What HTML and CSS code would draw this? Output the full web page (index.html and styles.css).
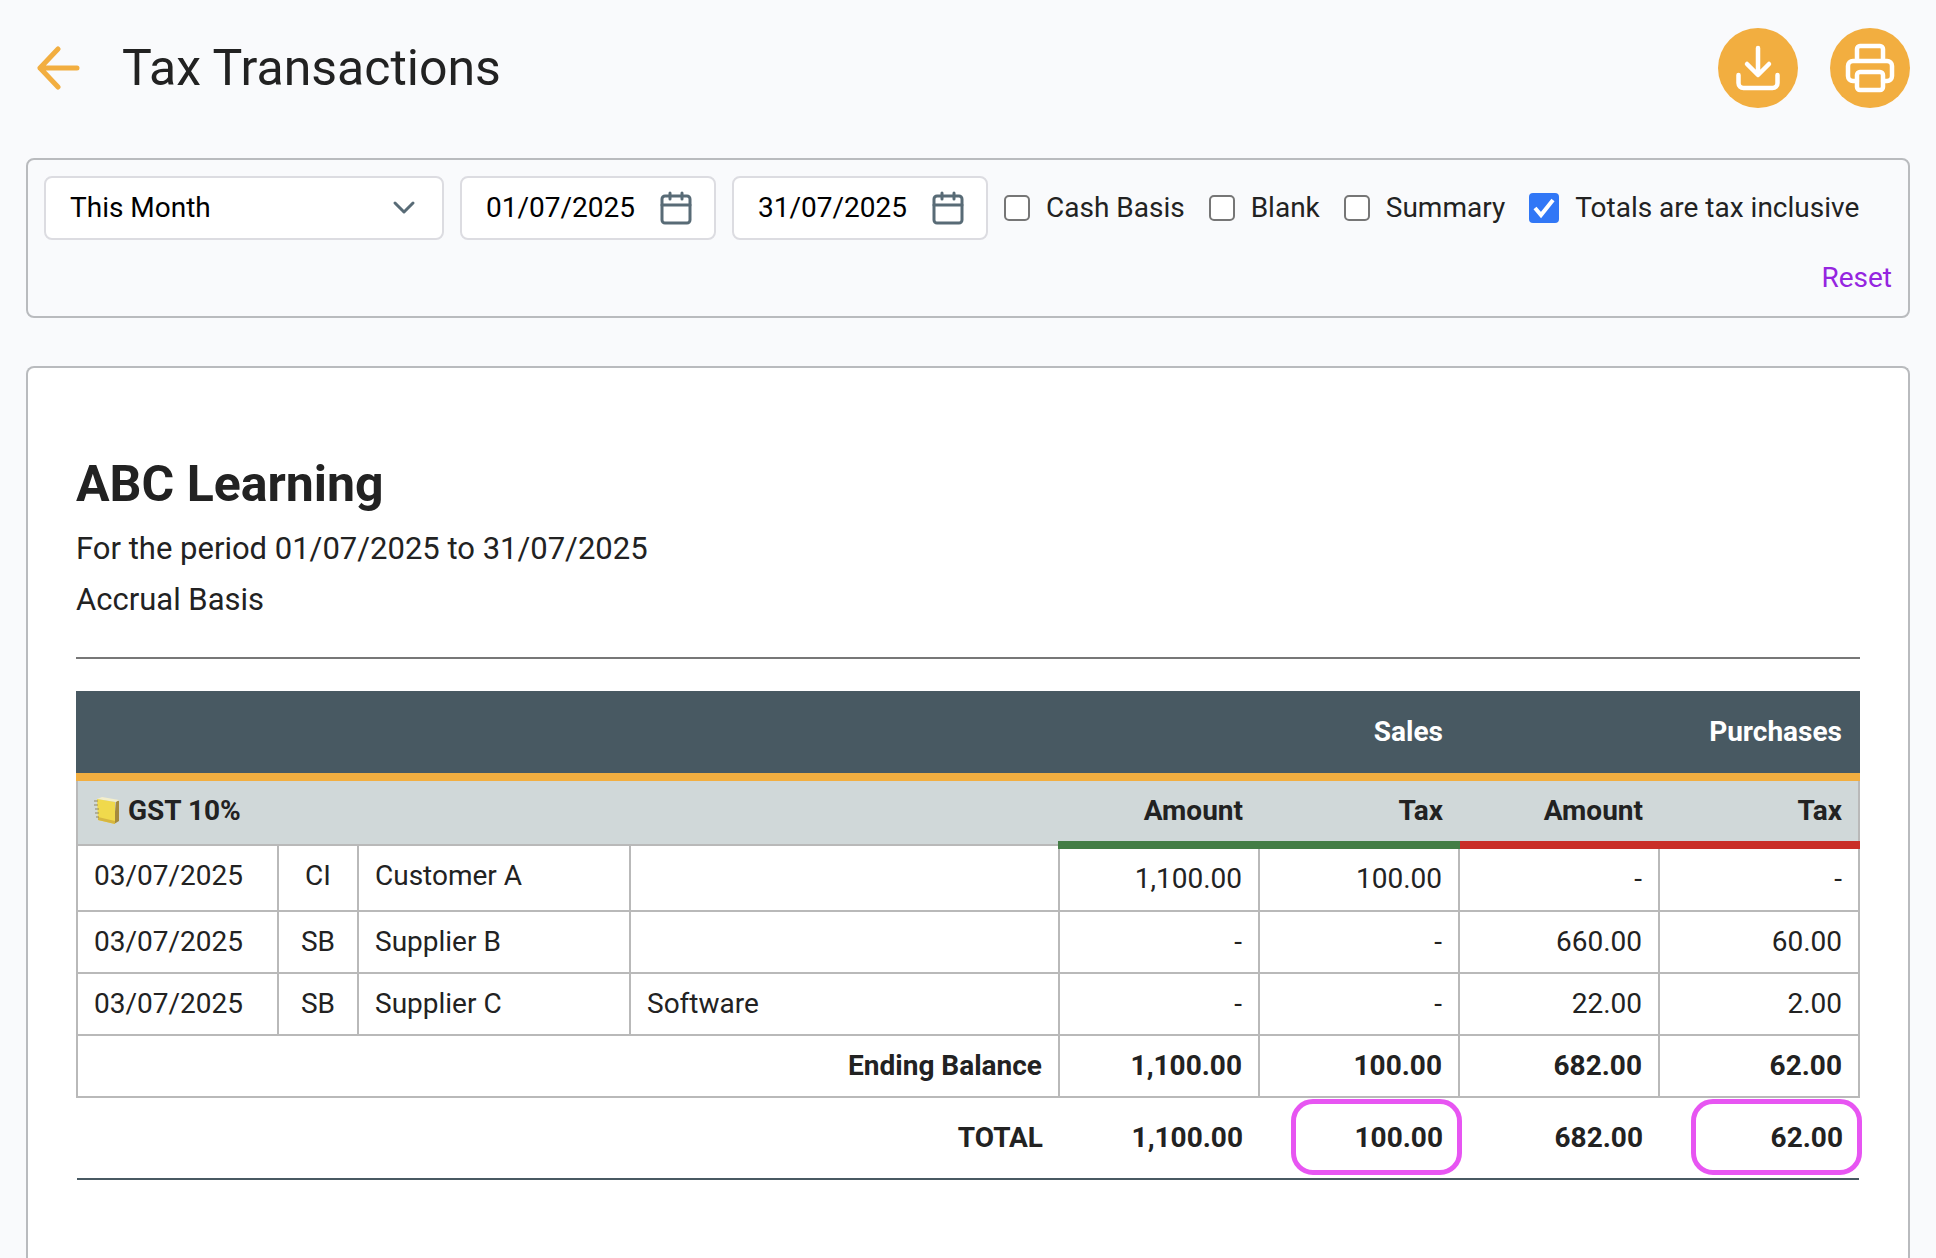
FILE: index.html
```
<!DOCTYPE html>
<html lang="en" dir="ltr">
  <head>
    <meta charset="utf-8">
    <title>Tax Transactions</title>
    <link rel="stylesheet" href="styles.css">
  </head>
  <body>
    <header class="page-header">
      <a class="back" href="#" aria-label="Back">
        <svg width="44" height="44" viewBox="0 0 44 44">
          <path d="M41 22H4M22 3L4 22l18 19"/>
        </svg>
      </a>
      <h1>Tax Transactions</h1>
      <div class="actions">
        <button class="round-btn" type="button" aria-label="Download">
          <svg width="48" height="48" viewBox="0 0 48 48">
            <path d="M24 4v26M13 20l11 11 11-11M4.500 31v8a5 5 0 0 0 5 5h29a5 5 0 0 0 5-5v-8"/>
          </svg>
        </button>
        <button class="round-btn" type="button" aria-label="Print">
          <svg width="48" height="48" viewBox="0 0 48 48">
            <path d="M11 37H7a5 5 0 0 1-5-5V22a5 5 0 0 1 5-5h34a5 5 0 0 1 5 5v10a5 5 0 0 1-5 5h-4M11 17V5a3 3 0 0 1 3-3h20a3 3 0 0 1 3 3v12"/>
            <rect x="11" y="28" width="26" height="18" rx="3"/>
          </svg>
        </button>
      </div>
    </header>

    <form class="filters">
      <div class="field field-period">
        <select aria-label="Period">
          <option>This Month</option>
          <option>Last Month</option>
        </select>
        <svg class="chevron" width="24" height="16" viewBox="0 0 24 16"><path d="M3 3l9 9 9-9"/></svg>
      </div>
      <div class="field field-date">
        <input type="text" value="01/07/2025" aria-label="From">
        <svg class="calendar" width="32" height="34" viewBox="0 0 32 34">
          <rect x="2" y="5" width="28" height="27" rx="3"/><path d="M2 14h28M10 2v6M22 2v6"/>
        </svg>
      </div>
      <div class="field field-date">
        <input type="text" value="31/07/2025" aria-label="To">
        <svg class="calendar" width="32" height="34" viewBox="0 0 32 34">
          <rect x="2" y="5" width="28" height="27" rx="3"/><path d="M2 14h28M10 2v6M22 2v6"/>
        </svg>
      </div>
      <div class="checks">
        <label><input type="checkbox">Cash Basis</label>
        <label><input type="checkbox">Blank</label>
        <label><input type="checkbox">Summary</label>
        <label><input type="checkbox" checked>Totals are tax inclusive</label>
      </div>
      <button class="reset" type="reset">Reset</button>
    </form>

    <main class="report">
      <h2>ABC Learning</h2>
      <p>For the period 01/07/2025 to 31/07/2025</p>
      <p>Accrual Basis</p>
      <hr>
      <table>
        <colgroup>
          <col class="col-date"><col class="col-type"><col class="col-name"><col>
          <col class="col-num"><col class="col-num"><col class="col-num"><col class="col-num">
        </colgroup>
        <thead>
          <tr class="groups">
            <th colspan="4"></th>
            <th colspan="2">Sales</th>
            <th colspan="2">Purchases</th>
          </tr>
          <tr class="heads">
            <th class="tax-name" colspan="4">
              <div class="tax-label">
                <svg width="26" height="28" viewBox="0 0 26 28">
                  <path fill="#a58a3c" d="M20 27l5-3V4l-3-1z"/>
                  <path fill="#f3eecb" d="M3 2l5-2 17 3-3 2z"/>
                  <path fill="#f0d94c" d="M3 2l18 3v22L4 23z"/>
                  <path fill="#d6b640" d="M4 20l17 4v3L4 23z"/>
                  <path fill="none" stroke="#8f8560" d="M0 4h4M0 8h4M1 12h4M1 16h4M2 20h3"/>
                </svg>
                GST 10%
              </div>
            </th>
            <th class="sales">Amount</th>
            <th class="sales">Tax</th>
            <th class="purchases">Amount</th>
            <th class="purchases">Tax</th>
          </tr>
        </thead>
        <tbody>
          <tr>
            <td>03/07/2025</td><td class="type">CI</td><td>Customer A</td><td></td>
            <td class="num">1,100.00</td><td class="num">100.00</td><td class="num">-</td><td class="num">-</td>
          </tr>
          <tr>
            <td>03/07/2025</td><td class="type">SB</td><td>Supplier B</td><td></td>
            <td class="num">-</td><td class="num">-</td><td class="num">660.00</td><td class="num">60.00</td>
          </tr>
          <tr>
            <td>03/07/2025</td><td class="type">SB</td><td>Supplier C</td><td>Software</td>
            <td class="num">-</td><td class="num">-</td><td class="num">22.00</td><td class="num">2.00</td>
          </tr>
          <tr class="ending">
            <td class="num" colspan="4">Ending Balance</td>
            <td class="num">1,100.00</td><td class="num">100.00</td><td class="num">682.00</td><td class="num">62.00</td>
          </tr>
        </tbody>
        <tfoot>
          <tr>
            <td colspan="4">TOTAL</td>
            <td>1,100.00</td>
            <td class="marked">100.00</td>
            <td>682.00</td>
            <td class="marked">62.00</td>
          </tr>
        </tfoot>
      </table>
    </main>
  </body>
</html>
```
FILE: styles.css
```
*{
  box-sizing : border-box;
}
html, body{
  height : 100%;
}
body{
  display : flex;
  flex-direction : column;
  margin : 0;
  padding : 28px 26px 0;
  background : #f9fafc;
  color : #222;
  font-family : Roboto, "Liberation Sans", sans-serif;
  font-size : 28px;
  line-height : 32px;
}
svg{
  display : block;
  flex : none;
}
/* header */
.page-header{
  display : flex;
  align-items : center;
  padding-left : 10px;
}
.back svg{
  fill : none;
  stroke : #f2ae40;
  stroke-width : 5;
  stroke-linecap : round;
  stroke-linejoin : round;
}
h1{
  margin : 0 0 0 42px;
  font-size : 50px;
  font-weight : 400;
  line-height : 60px;
}
.actions{
  display : flex;
  gap : 32px;
  margin-left : auto;
}
.round-btn{
  display : flex;
  align-items : center;
  justify-content : center;
  width : 80px;
  height : 80px;
  padding : 0;
  border : 0;
  border-radius : 50%;
  background : #f2ae40;
}
.round-btn svg{
  fill : none;
  stroke : #fff;
  stroke-width : 4.5;
  stroke-linecap : round;
  stroke-linejoin : round;
  overflow : visible;
}
/* filters */
.filters{
  display : flex;
  flex-wrap : wrap;
  align-items : center;
  gap : 18px 16px;
  margin-top : 50px;
  padding : 16px 16px 18px;
  border : 2px solid #b9bbbe;
  border-radius : 8px;
}
.field{
  display : flex;
  align-items : center;
  height : 64px;
  padding : 0 22px 0 24px;
  border : 2px solid #dcdce1;
  border-radius : 8px;
  background : #fff;
}
.field-period{
  width : 400px;
  padding-right : 26px;
}
.field-date{
  width : 256px;
}
.field select,
.field input{
  flex : 1;
  min-width : 0;
  padding : 0;
  border : 0;
  outline : 0;
  appearance : none;
  background : none;
  color : #000;
  font : inherit;
}
.chevron, .calendar{
  fill : none;
  stroke : #586b76;
  stroke-width : 3;
  stroke-linecap : round;
  stroke-linejoin : round;
}
.checks{
  display : flex;
  gap : 24px;
}
.checks label{
  display : flex;
  align-items : center;
  gap : 16px;
}
.checks input{
  width : 26px;
  height : 26px;
  margin : 0;
  border : 2px solid #767676;
  border-radius : 5px;
  appearance : none;
  background : #fff;
}
.checks input:checked{
  width : 30px;
  height : 30px;
  border : 0;
  border-radius : 4px;
  background : #3177f6 url("data:image/svg+xml,%3Csvg xmlns='http://www.w3.org/2000/svg' viewBox='0 0 30 30'%3E%3Cpath d='M6 15l6 7L24 7' fill='none' stroke='%23fff' stroke-width='4'/%3E%3C/svg%3E");
}
.reset{
  margin-left : auto;
  padding : 4px 0;
  border : 0;
  background : none;
  color : #9525e0;
  font : inherit;
}
/* report */
.report{
  flex : 1;
  margin-top : 48px;
  padding : 86px 48px 0;
  border : 2px solid #b9bbbe;
  border-bottom : 0;
  border-radius : 8px 8px 0 0;
  background : #fff;
}
h2{
  margin : 0 0 9px;
  font-size : 50px;
  line-height : 60px;
}
.report p{
  margin : 0;
  font-size : 31px;
  line-height : 51px;
}
hr{
  margin : 32px 0;
  border : 0;
  border-top : 2px solid #777;
}
table{
  width : 100%;
  table-layout : fixed;
  border-collapse : collapse;
}
.col-date{
  width : 201px;
}
.col-type{
  width : 80px;
}
.col-name{
  width : 272px;
}
.col-num{
  width : 200px;
}
th, td{
  padding : 14px 16px;
  text-align : left;
  vertical-align : top;
}
tbody td{
  border : 2px solid #b9b9b9;
}
tbody tr:first-child{
  height : 66px;
}
.groups th{
  padding : 25px 16px;
  border-bottom : 8px solid #f2ae40;
  background : #485962;
  color : #fff;
  text-align : right;
}
.groups th:first-child{
  border-left : 2px solid #485962;
}
.groups th:last-child{
  border-right : 2px solid #485962;
}
.heads th{
  background : #d0d8d9;
  text-align : right;
}
.heads .tax-name{
  border-left : 2px solid #b9b9b9;
}
.heads th:last-child{
  border-right : 2px solid #b9b9b9;
}
.heads .sales{
  border-bottom : 8px solid #437d45;
}
.heads .purchases{
  border-bottom : 8px solid #c92e27;
}
.tax-label{
  display : flex;
  align-items : center;
  gap : 8px;
}
.type{
  text-align : center;
}
.num, tfoot td{
  text-align : right;
}
.ending, tfoot{
  font-weight : 700;
}
tfoot td{
  position : relative;
  padding : 24px 16px;
  border-bottom : 2px solid #485962;
}
/* outline drawn around the tax totals */
.marked::after{
  content : "";
  position : absolute;
  top : 1px;
  right : -3px;
  bottom : 3px;
  left : 32px;
  border : 5px solid #e755f2;
  border-radius : 22px;
}
```
